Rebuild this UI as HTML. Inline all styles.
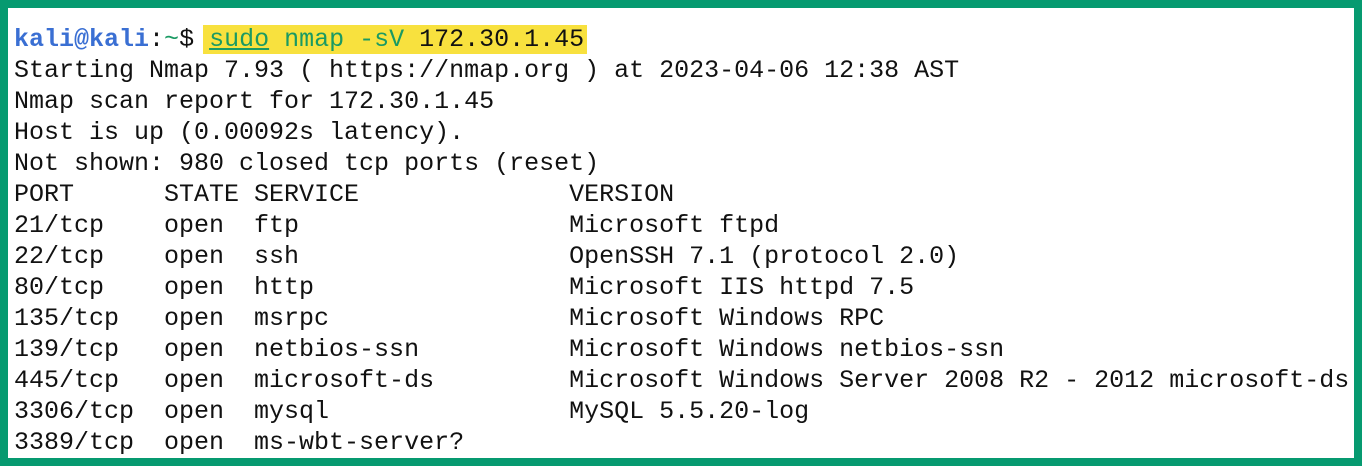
<!DOCTYPE html>
<html><head><meta charset="utf-8"><style>
html,body{margin:0;padding:0;}
body{width:1362px;height:466px;background:#fff;position:relative;overflow:hidden;}
.frame{position:absolute;left:0;top:0;width:1346px;height:450px;border:8px solid #069a70;}
pre{position:absolute;left:14px;top:24px;margin:0;font-family:"Liberation Mono",monospace;font-size:25px;line-height:31px;color:#111;white-space:pre;}
.b{color:#3a6fd3;font-weight:bold}
.g{color:#1a9a63}
.hl{background:#f8e13e;padding:0 3px 0 6px;margin-left:-6px;}
.u{text-decoration:underline;}
</style></head><body>
<div class="frame"></div>
<pre><span class="b">kali@kali</span>:<span class="g">~</span>$ <span class="hl"><span class="g u">sudo</span><span class="g"> nmap -sV</span> 172.30.1.45</span>
Starting Nmap 7.93 ( https://nmap.org ) at 2023-04-06 12:38 AST
Nmap scan report for 172.30.1.45
Host is up (0.00092s latency).
Not shown: 980 closed tcp ports (reset)
PORT      STATE SERVICE              VERSION
21/tcp    open  ftp                  Microsoft ftpd
22/tcp    open  ssh                  OpenSSH 7.1 (protocol 2.0)
80/tcp    open  http                 Microsoft IIS httpd 7.5
135/tcp   open  msrpc                Microsoft Windows RPC
139/tcp   open  netbios-ssn          Microsoft Windows netbios-ssn
445/tcp   open  microsoft-ds         Microsoft Windows Server 2008 R2 - 2012 microsoft-ds
3306/tcp  open  mysql                MySQL 5.5.20-log
3389/tcp  open  ms-wbt-server?</pre>
</body></html>
